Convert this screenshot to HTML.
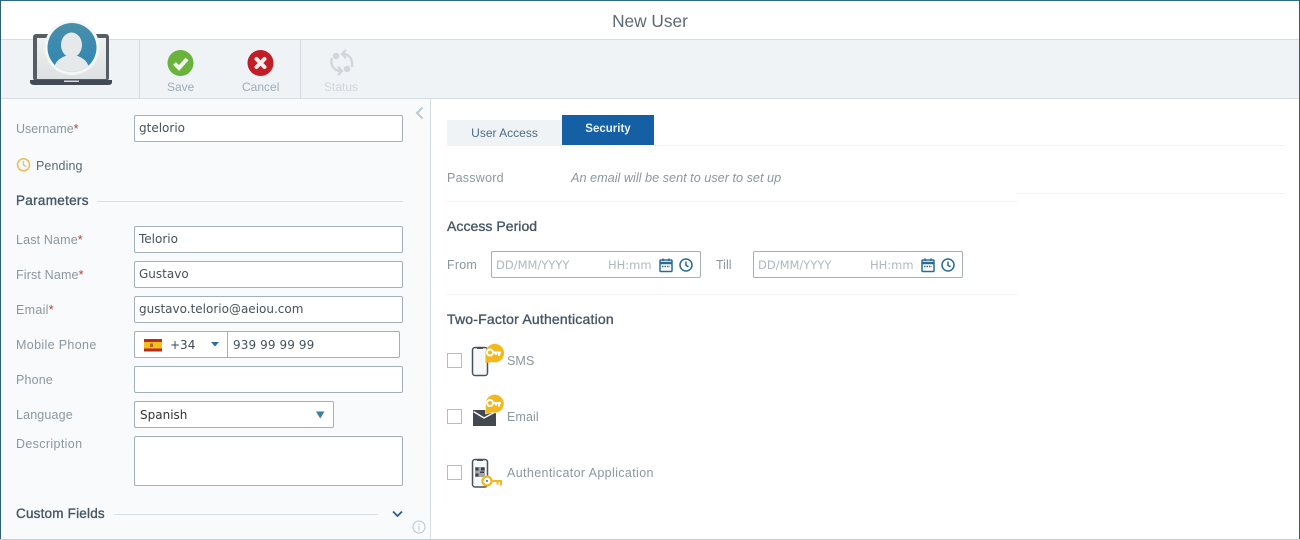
<!DOCTYPE html>
<html><head><meta charset="utf-8"><style>
*{box-sizing:border-box}
html,body{margin:0;padding:0;width:1300px;height:540px;overflow:hidden;background:#fff}
body{position:relative;font-family:"Liberation Sans",sans-serif;font-size:12.5px;color:#8a969f}
.a{position:absolute;white-space:nowrap}
.l{position:absolute;left:16px;color:#8b979f;font-size:12.5px;line-height:16px;white-space:nowrap;letter-spacing:.15px}
.l i{color:#b0443c;font-style:normal}
.in{position:absolute;background:#fff;border:1px solid #a3b0b7;border-radius:2px;color:#47525a;font-family:"DejaVu Sans",sans-serif;font-size:12px;line-height:25px;padding-left:4px;white-space:nowrap}
.dv{font-family:"DejaVu Sans",sans-serif;font-size:12px}
.h{position:absolute;color:#465664;-webkit-text-stroke:.35px #465664;font-size:14px;line-height:16px;white-space:nowrap;letter-spacing:.2px}
.ln{position:absolute;height:1px;background:#d9e0e5}
.lr{position:absolute;height:1px;background:#eff1f3}
.cb{position:absolute;left:447px;width:15px;height:15px;background:#fff;border:1px solid #b5bdc3}
.ph{position:absolute;color:#aeb8be;font-family:"DejaVu Sans",sans-serif;font-size:11.5px;line-height:16px;white-space:nowrap}
svg{position:absolute;overflow:visible}
</style></head><body>
<div class="a" style="left:0;top:0;width:1300px;height:1px;background:#2f6a8a"></div>
<div class="a" style="left:0;top:0;width:1px;height:540px;background:#2f5f70"></div>
<div class="a" style="left:1299px;top:0;width:1px;height:540px;background:#2f5f70"></div>
<div class="a" style="left:0;top:539px;width:1300px;height:1px;background:#c5ced4"></div>

<div class="a" style="left:0;width:1300px;top:11px;text-align:center;font-size:17.300px;line-height:20px;color:#5d6972">New User</div>

<div class="a" style="left:1px;top:39px;width:1298px;height:60px;background:#eff3f6;border-top:1px solid #d6dde2;border-bottom:1px solid #d6dde2"></div>
<div class="a" style="left:139px;top:40px;width:1px;height:58px;background:#d6dde2"></div>
<div class="a" style="left:300px;top:40px;width:1px;height:58px;background:#d6dde2"></div>

<svg style="left:0;top:0" width="140" height="98">
<defs><linearGradient id="g" x1="0" y1="0" x2="0" y2="1"><stop offset="0" stop-color="#4a8fa8"/><stop offset="1" stop-color="#2e85b5"/></linearGradient>
<linearGradient id="s" x1="0" y1="0" x2="0" y2="1"><stop offset="0" stop-color="#eef1f2"/><stop offset="1" stop-color="#dde1e2"/></linearGradient></defs>
<rect x="33" y="34" width="76" height="47" rx="3" fill="#565d65"/>
<rect x="37" y="38" width="69" height="41" fill="url(#s)"/>
<path d="M30 80H112V82Q112 85 108 85H35Q30 85 30 82Z" fill="#424b55"/>
<rect x="64" y="80.500" width="15" height="1.500" fill="#d5dade"/>
<circle cx="72" cy="47.500" r="27.500" fill="#f4f7f8"/>
<circle cx="72" cy="47.500" r="24.500" fill="url(#g)"/>
<clipPath id="c"><circle cx="72" cy="47.500" r="24.500"/></clipPath>
<g clip-path="url(#c)" fill="#e6e9ea"><ellipse cx="71.500" cy="45" rx="10.500" ry="12.500"/><ellipse cx="71.500" cy="71" rx="18" ry="16"/></g>
</svg>

<svg style="left:167px;top:49px" width="28" height="28"><circle cx="13.500" cy="14" r="13" fill="#69b23c"/><path d="M7.500 14.500L12 19L20 10" fill="none" stroke="#f2f8ec" stroke-width="4"/></svg>
<svg style="left:247px;top:49px" width="28" height="28"><circle cx="13.500" cy="14" r="13" fill="#c01f27"/><path d="M9.500 10L17.500 18M17.500 10L9.500 18" fill="none" stroke="#f9eded" stroke-width="4" stroke-linecap="round"/></svg>
<svg style="left:329px;top:49px" width="26" height="28" fill="none" stroke="#d1d6da" stroke-width="2.300"><path d="M14 5C20 5 24 10 23 18"/><path d="M17 1L13 5L17 9"/><path d="M3 9C1 15 4 22 12 22"/><path d="M9 18L13 22L9 26"/><circle cx="7" cy="7" r="3.200" fill="#d1d6da" stroke="none"/><circle cx="18" cy="20" r="3.200" fill="#d1d6da" stroke="none"/></svg>
<div class="a" style="left:167px;top:80px;font-size:12px;line-height:14px;color:#9eadb8">Save</div>
<div class="a" style="left:242px;top:80px;font-size:12px;line-height:14px;color:#9eadb8">Cancel</div>
<div class="a" style="left:324px;top:80px;font-size:12px;line-height:14px;color:#d1d6da">Status</div>

<div class="a" style="left:1px;top:99px;width:430px;height:440px;background:#f8fafc;border-right:1px solid #d6dde2"></div>
<svg style="left:415px;top:107px" width="10" height="12"><path d="M7.500 .5L2 6L7.500 11.500" fill="none" stroke="#b5ccd4" stroke-width="2"/></svg>

<div class="l" style="top:121px;letter-spacing:0">Username<i>*</i></div>
<div class="in" style="left:134px;top:115px;width:269px;height:27px">gtelorio</div>
<svg style="left:17px;top:158px" width="14" height="14"><circle cx="6.500" cy="6.800" r="6" fill="none" stroke="#e8bd55" stroke-width="1.500"/><path d="M6.500 3V7L9.200 8.800" fill="none" stroke="#e8bd55" stroke-width="1.200"/></svg>
<div class="a" style="left:36px;top:158px;color:#5c6a73;line-height:16px;font-size:12.5px;letter-spacing:.1px">Pending</div>

<div class="h" style="left:16px;top:193px;font-size:13.500px;letter-spacing:.3px">Parameters</div>
<div class="ln" style="left:97px;top:201px;width:306px"></div>

<div class="l" style="top:232px">Last Name<i>*</i></div>
<div class="in" style="left:134px;top:226px;width:269px;height:27px">Telorio</div>
<div class="l" style="top:267px">First Name<i>*</i></div>
<div class="in" style="left:134px;top:261px;width:269px;height:27px">Gustavo</div>
<div class="l" style="top:302px;letter-spacing:.3px">Email<i>*</i></div>
<div class="in" style="left:134px;top:296px;width:269px;height:27px">gustavo.telorio@aeiou.com</div>
<div class="l" style="top:337px;letter-spacing:.35px">Mobile Phone</div>
<div class="in" style="left:134px;top:331px;width:266px;height:27px"></div>
<div class="a" style="left:227px;top:332px;width:1px;height:25px;background:#a3b0b7"></div>
<svg style="left:144px;top:339px" width="18" height="12"><rect width="18" height="3" fill="#b92a20"/><rect y="3" width="18" height="6.500" fill="#f3bf1c"/><rect y="9.500" width="18" height="3" fill="#b92a20"/><rect x="6" y="4.500" width="3" height="3.500" fill="#b5622a"/></svg>
<div class="a dv" style="left:170px;top:337px;line-height:16px;color:#3f4a52">+34</div>
<svg style="left:211px;top:342px" width="8" height="5"><path d="M0 0H8L4 4.500Z" fill="#2d6d99"/></svg>
<div class="a dv" style="left:233px;top:337px;line-height:16px;color:#47525a;letter-spacing:.1px">939 99 99 99</div>
<div class="l" style="top:372px">Phone</div>
<div class="in" style="left:134px;top:366px;width:269px;height:27px"></div>
<div class="l" style="top:407px">Language</div>
<div class="in" style="left:134px;top:401px;width:200px;height:27px;color:#333;padding-left:5px;line-height:26px">Spanish</div>
<svg style="left:316px;top:411px" width="9" height="8"><path d="M0 0.500H8.500L4.250 7.500Z" fill="#3a7ea8"/></svg>
<div class="l" style="top:436px;letter-spacing:.35px">Description</div>
<div class="in" style="left:134px;top:436px;width:269px;height:50px"></div>

<div class="h" style="left:16px;top:506px;font-size:13.500px">Custom Fields</div>
<div class="ln" style="left:114px;top:514px;width:264px"></div>
<svg style="left:392px;top:510px" width="12" height="8"><path d="M1 1.500L5.500 6L10 1.500" fill="none" stroke="#24628a" stroke-width="1.800"/></svg>
<svg style="left:412px;top:520px" width="14" height="14"><circle cx="7" cy="7" r="6" fill="none" stroke="#b9c5cc" stroke-width="1"/><path d="M7 6V10.500M7 3.500V5" stroke="#b9c5cc" stroke-width="1"/></svg>

<div class="a" style="left:447px;top:120px;width:115px;height:26px;background:#eff3f6;text-align:center;line-height:26px;font-size:12px;color:#4f6b85">User Access</div>
<div class="a" style="left:562px;top:115px;width:92px;height:30px;background:#1560a5;text-align:center;line-height:29px;font-size:11.500px;font-weight:bold;color:#e8f1f8">Security</div>
<div class="lr" style="left:654px;top:145px;width:631px"></div>

<div class="a" style="left:447px;top:170px;line-height:16px;color:#8b979f;letter-spacing:.25px">Password</div>
<div class="a" style="left:571px;top:170px;line-height:16px;font-style:italic;color:#8b979f;font-size:12.700px">An email will be sent to user to set up</div>
<div class="lr" style="left:1016px;top:193px;width:269px"></div>
<div class="lr" style="left:447px;top:201px;width:570px"></div>

<div class="h" style="left:447px;top:218px;letter-spacing:.05px">Access Period</div>
<div class="a" style="left:447px;top:257px;line-height:16px;color:#8b979f;letter-spacing:.2px">From</div>
<div class="in" style="left:491px;top:251px;width:210px;height:27px"></div>
<div class="ph" style="left:496px;top:257px">DD/MM/YYYY</div>
<div class="ph" style="left:608px;top:257px">HH:mm</div>
<svg style="left:659px;top:258px" width="14" height="14" fill="none" stroke="#2b6a92" stroke-width="1.500"><rect x="1" y="2" width="12" height="11.500" rx="1"/><path d="M1 5H13" stroke-width="2.500"/><path d="M4 .5V3M10 .5V3"/><path d="M3 8.500H11" stroke-dasharray="1.500 1"/></svg>
<svg style="left:679px;top:258px" width="14" height="14" fill="none" stroke="#2b6a92" stroke-width="1.500"><circle cx="7" cy="7" r="6"/><path d="M7 3.500V7.300L9.500 8.800"/></svg>
<div class="a" style="left:716px;top:257px;line-height:16px;color:#8b979f">Till</div>
<div class="in" style="left:753px;top:251px;width:210px;height:27px"></div>
<div class="ph" style="left:758px;top:257px">DD/MM/YYYY</div>
<div class="ph" style="left:870px;top:257px">HH:mm</div>
<svg style="left:921px;top:258px" width="14" height="14" fill="none" stroke="#2b6a92" stroke-width="1.500"><rect x="1" y="2" width="12" height="11.500" rx="1"/><path d="M1 5H13" stroke-width="2.500"/><path d="M4 .5V3M10 .5V3"/><path d="M3 8.500H11" stroke-dasharray="1.500 1"/></svg>
<svg style="left:941px;top:258px" width="14" height="14" fill="none" stroke="#2b6a92" stroke-width="1.500"><circle cx="7" cy="7" r="6"/><path d="M7 3.500V7.300L9.500 8.800"/></svg>
<div class="lr" style="left:447px;top:294px;width:570px"></div>

<div class="h" style="left:447px;top:311px">Two-Factor Authentication</div>

<div class="cb" style="top:353px"></div>
<svg style="left:470px;top:344px" width="36" height="34"><rect x="2.500" y="3.500" width="15" height="28" rx="2.500" fill="#f6f8f9" stroke="#4b5258" stroke-width="1.500"/><path d="M7 3.500H13V5H7Z" fill="#4b5258"/><path d="M15.500 19V9.500A9.300 9.300 0 1 1 22 18Z" fill="#f3b81f"/><circle cx="20" cy="8.500" r="3" fill="none" stroke="#fff" stroke-width="2"/><path d="M23 8.500H31M29 8.500V12M26 8.500V11" stroke="#fff" stroke-width="2" fill="none"/></svg>
<div class="a" style="left:507px;top:353px;line-height:16px;color:#8b979f;letter-spacing:.1px">SMS</div>

<div class="cb" style="top:409px"></div>
<svg style="left:470px;top:394px" width="36" height="36"><path d="M3 16H26V32H3Z" fill="#44494f"/><path d="M3.600 17.600L14 24L24 18.600" fill="none" stroke="#fff" stroke-width="1.400"/><path d="M15.500 20V10A9.300 9.300 0 1 1 22 18.500Z" fill="#f3b81f" stroke="#fff" stroke-width=".6"/><circle cx="20" cy="9" r="3" fill="none" stroke="#fff" stroke-width="2"/><path d="M23 9H31M29 9V12.500M26 9V11.500" stroke="#fff" stroke-width="2" fill="none"/></svg>
<div class="a" style="left:507px;top:409px;line-height:16px;color:#8b979f;letter-spacing:.1px">Email</div>

<div class="cb" style="top:465px"></div>
<svg style="left:470px;top:457px" width="36" height="34"><rect x="2.500" y="2.500" width="15" height="27.500" rx="2.500" fill="#f6f8f9" stroke="#4b5258" stroke-width="1.500"/><path d="M7 2.500H13V4H7Z" fill="#4b5258"/><rect x="5" y="10" width="10" height="10" fill="#a4a8ab"/><path d="M5.500 10.500H8.500V13.500H5.500ZM11 10.500H14.500V13.500H11ZM5.500 16.500H8.500V19.500H5.500ZM10 14.500H14V16H10Z" fill="#3b4046"/><circle cx="17" cy="24" r="4.500" fill="#fff" stroke="#f3b81f" stroke-width="2.200"/><circle cx="17" cy="24" r="1" fill="#666"/><path d="M22 24H32M31 24V28.500M27.500 24V27.500" fill="none" stroke="#f3b81f" stroke-width="2"/></svg>
<div class="a" style="left:507px;top:465px;line-height:16px;color:#8b979f;letter-spacing:.37px">Authenticator Application</div>
</body></html>
